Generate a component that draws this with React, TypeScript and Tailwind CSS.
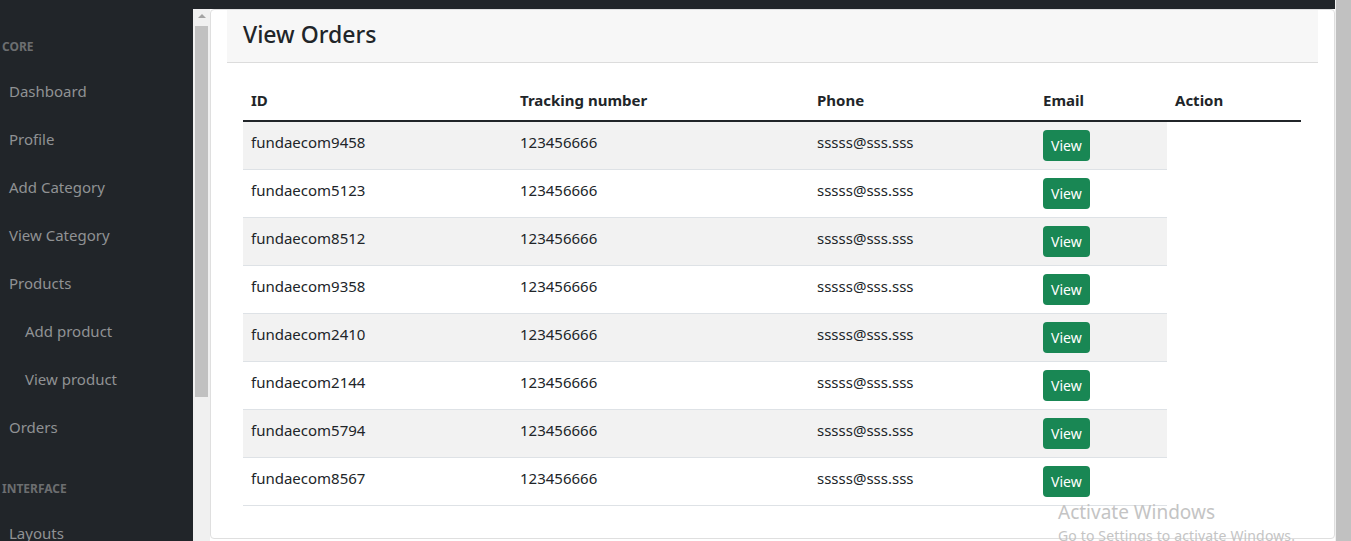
import React from "react";

const rows = [
  "fundaecom9458",
  "fundaecom5123",
  "fundaecom8512",
  "fundaecom9358",
  "fundaecom2410",
  "fundaecom2144",
  "fundaecom5794",
  "fundaecom8567",
];

function NavHeading({ children }: { children: React.ReactNode }) {
  return (
    <div className="pl-[2px] pt-[29px] pb-[11px] text-[12px] leading-[18px] font-bold uppercase text-[#6c6e70]">
      {children}
    </div>
  );
}

function NavItem({ children, sub }: { children: React.ReactNode; sub?: boolean }) {
  return (
    <div className={`${sub ? "pl-[25px]" : "pl-[9px]"} py-[12px] text-[15px] leading-[24px] text-[#909294]`}>
      {children}
    </div>
  );
}

export default function App() {
  return (
    <div
      className="relative flex h-[541px] w-[1351px] overflow-hidden bg-white text-[#212529]"
      style={{ fontFamily: '"Noto Sans", "Open Sans", sans-serif' }}
    >
      {/* Sidebar */}
      <div className="w-[193px] shrink-0 bg-[#212529] pt-[9px]">
        <NavHeading>Core</NavHeading>
        <NavItem>Dashboard</NavItem>
        <NavItem>Profile</NavItem>
        <NavItem>Add Category</NavItem>
        <NavItem>View Category</NavItem>
        <NavItem>Products</NavItem>
        <NavItem sub>Add product</NavItem>
        <NavItem sub>View product</NavItem>
        <NavItem>Orders</NavItem>
        <NavHeading>Interface</NavHeading>
        <NavItem>Layouts</NavItem>
      </div>

      {/* Main column */}
      <div className="flex w-[1142px] shrink-0 flex-col">
        <div className="h-[9px] bg-[#212529]" />
        <div className="flex flex-1">
          {/* inner scrollbar */}
          <div className="flex w-[17px] shrink-0 flex-col items-center bg-[#f0f0f0]">
            <div className="mt-[5px] h-0 w-0 border-x-[4px] border-b-[4px] border-x-transparent border-b-[#a3a3a3]" />
            <div className="mt-[8px] h-[371px] w-[13px] bg-[#c1c1c1]" />
          </div>
          {/* card */}
          <div className="mb-[2px] flex-1 rounded-[4px] border border-[#dfdfdf] bg-white px-[16px]">
            <div className="h-[53px] border-b border-[#dcdcdc] bg-[#f7f7f7] px-[16px] py-[8px]">
              <h1 className="text-[23px] leading-[32px] font-medium text-[#212529]">View Orders</h1>
            </div>
            <div className="px-[16px] pt-[17px]">
              <table className="w-[1058px] border-collapse text-left text-[15px]">
                <thead>
                  <tr className="border-b-2 border-[#212529]">
                    <th className="w-[269px] px-[8px] py-[8px] leading-[24px] font-bold">ID</th>
                    <th className="w-[297px] px-[8px] py-[8px] leading-[24px] font-bold">Tracking number</th>
                    <th className="w-[226px] px-[8px] py-[8px] leading-[24px] font-bold">Phone</th>
                    <th className="w-[132px] px-[8px] py-[8px] leading-[24px] font-bold">Email</th>
                    <th className="w-[134px] px-[8px] py-[8px] leading-[24px] font-bold">Action</th>
                  </tr>
                </thead>
                <tbody>
                  {rows.map((id, i) => {
                    const bg = i % 2 === 0 ? "bg-[#f2f2f2]" : "bg-white";
                    const td = `${bg} border-b border-[#dee2e6] px-[8px] py-[8px] align-top leading-[24px]`;
                    return (
                      <tr key={id}>
                        <td className={td}>{id}</td>
                        <td className={td}>123456666</td>
                        <td className={td}>sssss@sss.sss</td>
                        <td className={td}>
                          <button className="h-[31px] rounded-[4px] bg-[#198754] px-[8px] text-[14px] leading-[21px] text-white">
                            View
                          </button>
                        </td>
                      </tr>
                    );
                  })}
                </tbody>
              </table>
            </div>
          </div>
        </div>
      </div>

      {/* Right scrollbar */}
      <div className="flex w-[16px] shrink-0 bg-[#f0f0f0] pl-[1px]">
        <div className="h-full w-[15px] bg-[#c1c1c1]" />
      </div>

      {/* Activate Windows watermark */}
      <div className="pointer-events-none absolute left-[1058px] top-[499px] text-[#c4c4c4]">
        <div className="text-[19px] leading-[27px]">Activate Windows</div>
        <div className="text-[14px] leading-[20px] tracking-[0.15px]">Go to Settings to activate Windows.</div>
      </div>
    </div>
  );
}
